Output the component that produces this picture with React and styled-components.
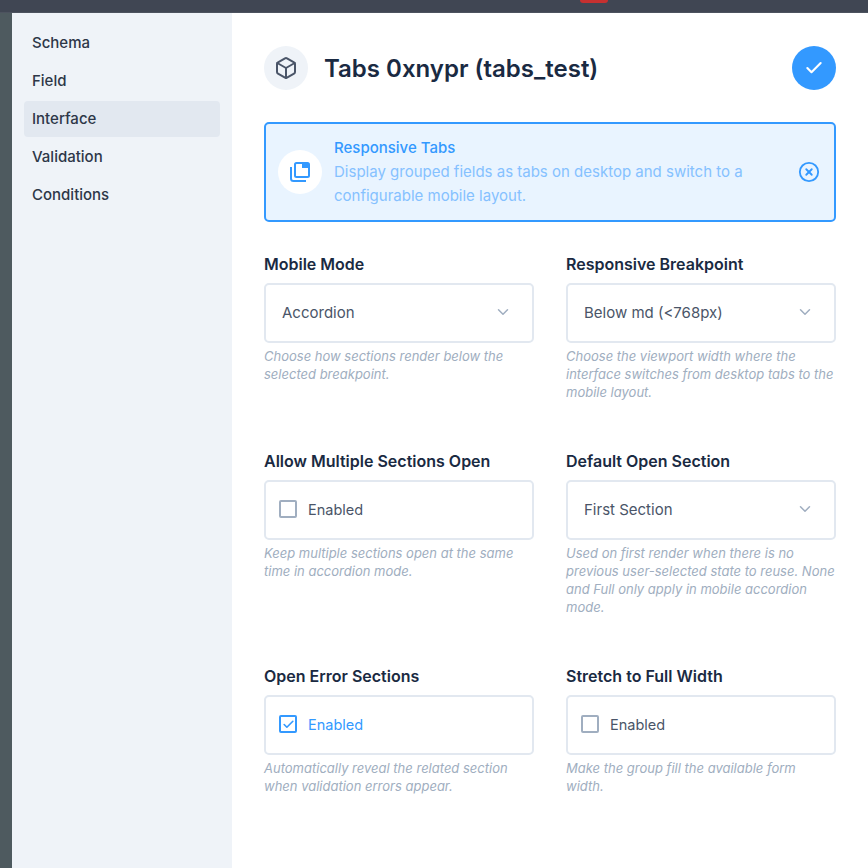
import React from "react";
import styled, { createGlobalStyle } from "styled-components";
import { Box, Check, ChevronDown, CircleX } from "lucide-react";

const GlobalStyle = createGlobalStyle`
  html, body {
    margin: 0;
    padding: 0;
    height: 100%;
    background: #fff;
    font-family: Inter, "Noto Sans", sans-serif;
    overflow: hidden;
  }
`;

const Page = styled.div`
  width: 868px;
  height: 868px;
  display: flex;
  flex-direction: column;
  overflow: hidden;
  background: #fff;
`;

const TopBar = styled.div`
  position: relative;
  flex: none;
  height: 13px;
  background: #404653;
  border-bottom: 1px solid #4d535f;
  box-sizing: border-box;
`;

const RedTab = styled.span`
  position: absolute;
  left: 580px;
  top: 0;
  width: 28px;
  height: 3px;
  background: #c53030;
  border-radius: 0 0 3px 3px;
`;

const Body = styled.div`
  flex: 1;
  display: flex;
  min-height: 0;
`;

const Strip = styled.div`
  flex: none;
  width: 12px;
  background: #4e5a5f;
`;

const Sidebar = styled.nav`
  flex: none;
  width: 220px;
  box-sizing: border-box;
  padding: 12px;
  background: #eff3f8;
  display: flex;
  flex-direction: column;
  gap: 2px;
`;

const NavItem = styled.div`
  height: 36px;
  line-height: 36px;
  padding-left: 8px;
  border-radius: 4px;
  font-size: 15px;
  font-weight: 500;
  color: #2d3748;
  background: ${(p) => (p.$active ? "#e2e8f0" : "transparent")};
`;

const Main = styled.main`
  flex: 1;
  box-sizing: border-box;
  padding: 33px 32px 0;
`;

const Header = styled.header`
  display: flex;
  align-items: center;
  gap: 16px;
  height: 44px;
`;

const HeaderIcon = styled.div`
  width: 44px;
  height: 44px;
  border-radius: 50%;
  background: #eff3f8;
  color: #4a5568;
  display: flex;
  align-items: center;
  justify-content: center;
`;

const Title = styled.h1`
  flex: 1;
  margin: 0;
  font-size: 24px;
  font-weight: 600;
  color: #1a2a42;
`;

const SaveButton = styled.button`
  width: 44px;
  height: 44px;
  padding: 0;
  border: 0;
  border-radius: 50%;
  background: #3399ff;
  color: #fff;
  display: flex;
  align-items: center;
  justify-content: center;
`;

const Alert = styled.div`
  margin-top: 32px;
  height: 100px;
  box-sizing: border-box;
  border: 2px solid #3399ff;
  border-radius: 5px;
  background: #e9f4ff;
  padding: 0 14px 0 12px;
  display: flex;
  align-items: center;
`;

const AlertIcon = styled.div`
  flex: none;
  width: 44px;
  height: 44px;
  border-radius: 50%;
  background: #fff;
  color: #3399ff;
  display: flex;
  align-items: center;
  justify-content: center;
`;

const AlertText = styled.div`
  flex: 1;
  margin-left: 12px;
  font-size: 15px;
  line-height: 24px;
  color: #85c1ff;
`;

const AlertTitle = styled.div`
  font-weight: 500;
  color: #3399ff;
`;

const CloseIcon = styled.div`
  flex: none;
  color: #3399ff;
  display: flex;
`;

const Grid = styled.div`
  margin-top: 32px;
  display: grid;
  grid-template-columns: 270px 270px;
  column-gap: 32px;
  row-gap: 50px;
`;

const Label = styled.div`
  font-size: 16px;
  line-height: 20px;
  font-weight: 600;
  color: #1a2a42;
  margin-bottom: 9px;
`;

const Control = styled.div`
  height: 60px;
  box-sizing: border-box;
  border: 2px solid #e2e8f0;
  border-radius: 5px;
  background: #fff;
  display: flex;
  align-items: center;
`;

const SelectControl = styled(Control)`
  justify-content: space-between;
  padding: 0 20px 2px 16px;
  font-size: 15px;
  color: #4a5568;
  svg {
    color: #a0aec0;
  }
`;

const CheckControl = styled(Control)`
  gap: 11px;
  padding: 0 0 2px 13px;
  font-size: 14.5px;
  color: ${(p) => (p.$on ? "#3399ff" : "#4a5568")};
`;

const CheckBox = styled.span`
  width: 18px;
  height: 18px;
  box-sizing: border-box;
  border: 2px solid ${(p) => (p.$on ? "#3399ff" : "#a0aec0")};
  border-radius: 2px;
  color: #3399ff;
  display: flex;
  align-items: center;
  justify-content: center;
`;

const Help = styled.p`
  margin: 4px 0 0;
  font-size: 13px;
  line-height: 18px;
  font-style: italic;
  color: #a0aec0;
`;

const TabsIcon = () => (
  <svg width="22" height="22" viewBox="0 0 22 22" fill="none">
    <path d="M2 6v11.5A2.5 2.5 0 0 0 4.500 20H17" stroke="currentColor" strokeWidth="2" />
    <rect x="6" y="2" width="14" height="14" rx="1.500" stroke="currentColor" strokeWidth="2" />
    <path d="M13 2h6a1 1 0 0 1 1 1v4h-7z" fill="currentColor" />
  </svg>
);

const Select = ({ value }) => (
  <SelectControl>
    {value}
    <ChevronDown size={18} strokeWidth={2} />
  </SelectControl>
);

const Toggle = ({ on }) => (
  <CheckControl $on={on}>
    <CheckBox $on={on}>{on && <Check size={13} strokeWidth={3} />}</CheckBox>
    Enabled
  </CheckControl>
);

const fields = [
  {
    label: "Mobile Mode",
    control: <Select value="Accordion" />,
    help: "Choose how sections render below the selected breakpoint.",
  },
  {
    label: "Responsive Breakpoint",
    control: <Select value="Below md (<768px)" />,
    help: "Choose the viewport width where the interface switches from desktop tabs to the mobile layout.",
  },
  {
    label: "Allow Multiple Sections Open",
    control: <Toggle />,
    help: "Keep multiple sections open at the same time in accordion mode.",
  },
  {
    label: "Default Open Section",
    control: <Select value="First Section" />,
    help: "Used on first render when there is no previous user-selected state to reuse. None and Full only apply in mobile accordion mode.",
  },
  {
    label: "Open Error Sections",
    control: <Toggle on />,
    help: "Automatically reveal the related section when validation errors appear.",
  },
  {
    label: "Stretch to Full Width",
    control: <Toggle />,
    help: "Make the group fill the available form width.",
  },
];

const navItems = ["Schema", "Field", "Interface", "Validation", "Conditions"];

export default function App() {
  return (
    <Page>
      <GlobalStyle />
      <TopBar>
        <RedTab />
      </TopBar>
      <Body>
        <Strip />
        <Sidebar>
          {navItems.map((item) => (
            <NavItem key={item} $active={item === "Interface"}>
              {item}
            </NavItem>
          ))}
        </Sidebar>
        <Main>
          <Header>
            <HeaderIcon>
              <Box size={24} strokeWidth={2} />
            </HeaderIcon>
            <Title>Tabs 0xnypr (tabs_test)</Title>
            <SaveButton>
              <Check size={20} strokeWidth={2.5} />
            </SaveButton>
          </Header>
          <Alert>
            <AlertIcon>
              <TabsIcon />
            </AlertIcon>
            <AlertText>
              <AlertTitle>Responsive Tabs</AlertTitle>
              Display grouped fields as tabs on desktop and switch to a configurable mobile layout.
            </AlertText>
            <CloseIcon>
              <CircleX size={22} strokeWidth={2} />
            </CloseIcon>
          </Alert>
          <Grid>
            {fields.map((field) => (
              <div key={field.label}>
                <Label>{field.label}</Label>
                {field.control}
                <Help>{field.help}</Help>
              </div>
            ))}
          </Grid>
        </Main>
      </Body>
    </Page>
  );
}
